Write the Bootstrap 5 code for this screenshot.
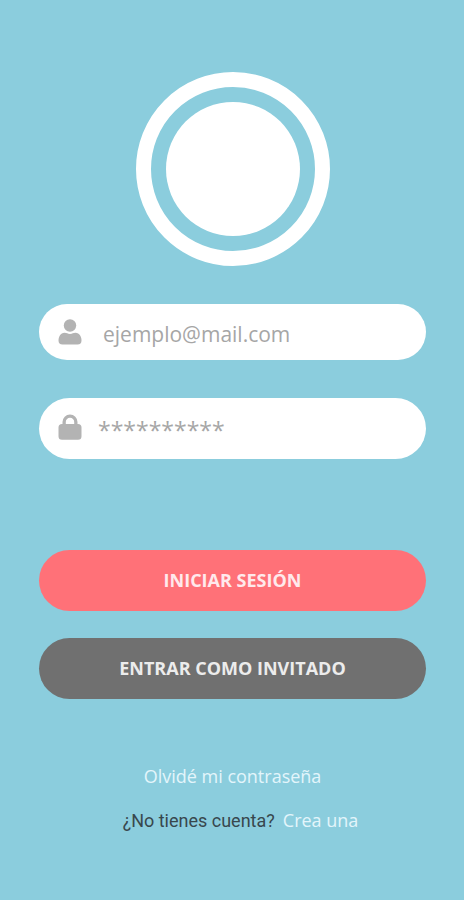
<!DOCTYPE html>
<html lang="es">
<head>
<meta charset="utf-8">
<meta name="viewport" content="width=device-width, initial-scale=1">
<title>Iniciar sesión</title>
<link href="https://cdn.jsdelivr.net/npm/bootstrap@5.3.0/dist/css/bootstrap.min.css" rel="stylesheet">
<style>
  body { background: #8bcddd; font-family: "Open Sans", sans-serif; }
  .login { padding: 72px 38px 64px 39px; }
  .logo { width: 194px; height: 194px; border: 15px solid #fff; padding: 15px; }
  .logo-core { background: #fff; }
  .field { background: #fff; border-radius: 32px; padding-left: 19px; }
  .field-mail { height: 56px; margin-top: 38px; padding-bottom: 1px; }
  .field-pass { height: 61px; margin-top: 38px; padding-bottom: 3px; }
  .field svg { width: 24px; height: 26px; fill: #b3b3b3; }
  .field .form-control { font-size: 21px; line-height: 28px; color: #777; padding: 4px 16px 0; }
  .field .form-control::placeholder { color: #a6a6a6; opacity: 1; }
  .field-mail .form-control { padding-left: 21px; }
  .field-pass .form-control { font-size: 23px; padding-top: 6px; }
  .actions { margin-top: 91px; gap: 27px; }
  .btn-pill { height: 61px; border: 0; border-radius: 32px; font-size: 18px; font-weight: 700; }
  .btn-login, .btn-login:hover { background: #ff7178; color: #ffe9ec; }
  .btn-guest, .btn-guest:hover { background: #707070; color: #ececec; }
  .links { margin-top: 63px; gap: 16px; font-size: 18px; line-height: 28px; }
  .links a { color: #e3f5fb; }
  .question { font-family: Roboto, sans-serif; color: #38474d; }
</style>
</head>
<body>
<main class="login container-fluid d-flex flex-column">
  <div class="logo rounded-circle mx-auto"><div class="logo-core rounded-circle h-100"></div></div>
  <form class="d-flex flex-column">
    <div class="field field-mail d-flex align-items-center">
      <svg class="flex-shrink-0" viewBox="0 0 24 26" aria-hidden="true"><circle cx="12" cy="6.500" r="6.200"/><path d="M6.500 13.800C9 13.800 9.500 15 12 15S15 13.800 17.500 13.800C21.500 13.800 23.500 18 23.500 21.500Q23.500 25.500 19.500 25.500H4.500Q.5 25.500 .5 21.500C.5 18 2.500 13.800 6.500 13.800Z"/></svg>
      <input type="email" class="form-control border-0 bg-transparent shadow-none" placeholder="ejemplo@mail.com" aria-label="Correo electrónico">
    </div>
    <div class="field field-pass d-flex align-items-center">
      <svg class="flex-shrink-0" viewBox="0 0 24 26" aria-hidden="true"><path fill-rule="evenodd" d="M4.500 10V8A7.500 7.500 0 0 1 19.500 8V10H20Q23.500 10 23.500 13.500V22.300Q23.500 25.800 20 25.800H4Q.5 25.800 .5 22.300V13.500Q.5 10 4 10ZM7.800 10H16.200V8A4.200 4.200 0 0 0 7.800 8Z"/></svg>
      <input type="password" class="form-control border-0 bg-transparent shadow-none" placeholder="**********" aria-label="Contraseña">
    </div>
    <div class="actions d-flex flex-column">
      <button type="submit" class="btn btn-pill btn-login w-100">INICIAR SESIÓN</button>
      <button type="button" class="btn btn-pill btn-guest w-100">ENTRAR COMO INVITADO</button>
    </div>
  </form>
  <div class="links d-flex flex-column align-items-center">
    <a href="#" class="text-decoration-none">Olvidé mi contraseña</a>
    <div class="d-flex flex-wrap justify-content-center align-items-baseline ps-3">
      <span class="question me-2">¿No tienes cuenta?</span>
      <a href="#" class="text-decoration-none">Crea una</a>
    </div>
  </div>
</main>
<script src="https://cdn.jsdelivr.net/npm/bootstrap@5.3.0/dist/js/bootstrap.bundle.min.js"></script>
</body>
</html>
